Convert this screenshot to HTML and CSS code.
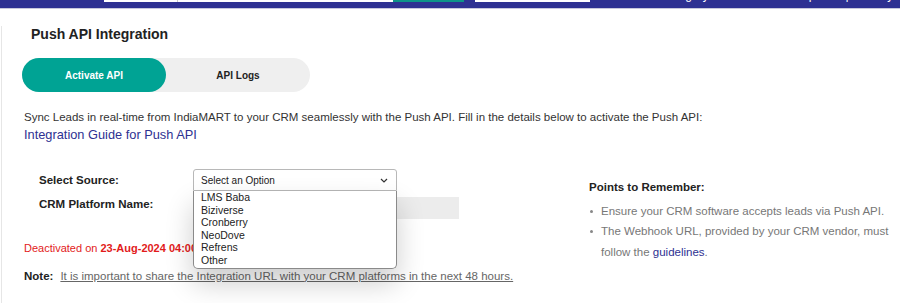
FILE: index.html
```html
<!DOCTYPE html>
<html lang="en">
<head>
<meta charset="utf-8">
<title>Push API Integration</title>
<link rel="stylesheet" href="styles.css">
</head>
<body>
<header class="topbar">
  <div class="topbar-inner">
    <div class="search">
      <div class="search-cat"></div>
      <div class="search-input"></div>
    </div>
    <div class="search-btn"></div>
    <div class="loc"></div>
    <div class="nav-text">
      <span class="nav-a">Buy Category</span>
      <span class="nav-b">Help</span>
      <span class="nav-c">| Hi Kavya</span>
    </div>
  </div>
</header>

<main class="panel">
  <h1 class="title">Push API Integration</h1>

  <div class="tabs">
    <button class="tab active" type="button">Activate API</button>
    <button class="tab" type="button">API Logs</button>
  </div>

  <div class="intro">
    <p class="intro-text">Sync Leads in real-time from IndiaMART to your CRM seamlessly with the Push API. Fill in the details below to activate the Push API:</p>
    <a class="intro-link" href="#">Integration Guide for Push API</a>
  </div>

  <div class="content">
    <div class="form">
      <div class="row row-select">
        <label class="label">Select Source:</label>
        <div class="select-wrap">
          <div class="select">
            <span>Select an Option</span>
            <svg class="chev" width="8" height="5" viewBox="0 0 8 5"><polyline points="1,1 4,4 7,1" fill="none" stroke="#333" stroke-width="1.2"/></svg>
          </div>
          <ul class="dropdown">
            <li>LMS Baba</li>
            <li>Biziverse</li>
            <li>Cronberry</li>
            <li>NeoDove</li>
            <li>Refrens</li>
            <li>Other</li>
          </ul>
        </div>
      </div>
      <div class="row row-crm">
        <label class="label">CRM Platform Name:</label>
        <div class="crm-input"></div>
      </div>
      <p class="status">Deactivated on <strong>23-Aug-2024 04:00:00 PM</strong></p>
    </div>

    <aside class="points">
      <h2 class="points-title">Points to Remember:</h2>
      <ul class="points-list">
        <li>Ensure your CRM software accepts leads via Push API.</li>
        <li>The Webhook URL, provided by your CRM vendor, must follow the <a href="#">guidelines</a>.</li>
      </ul>
    </aside>
  </div>

  <p class="note"><strong>Note:</strong><span class="note-text">It is important to share the Integration URL with your CRM platforms in the next 48 hours.</span></p>
</main>
</body>
</html>
```

FILE: styles.css
```css
* { box-sizing: border-box; }

body {
  margin: 0;
  background: #fff;
  font-family: "Liberation Sans", Arial, sans-serif;
  color: #222;
}

/* top bar */
.topbar {
  height: 9px;
  background: #2e3192;
  border-bottom: 1px solid #c8c8dc;
  overflow: hidden;
}
.topbar-inner {
  display: flex;
  height: 30px;
  margin-top: -28px;
  padding-left: 104px;
}
.search {
  display: flex;
  width: 289px;
  background: #fff;
}
.search-cat {
  width: 74px;
  border-right: 1px solid #c9c9c9;
}
.search-input { flex: 1; }
.search-btn {
  width: 71px;
  background: #0d9488;
}
.loc {
  width: 115px;
  margin-left: 11px;
  background: #fff;
}
.nav-text {
  display: flex;
  align-items: flex-end;
  flex: 1;
  color: #fff;
  font-size: 12px;
  line-height: 13px;
}
.nav-a { margin-left: 70px; }
.nav-b { margin-left: 60px; }
.nav-c { margin-left: 30px; white-space: nowrap; }

/* panel */
.panel {
  margin-left: 1px;
  border-left: 1px solid #e6e6e6;
  padding-left: 22px;
  padding-bottom: 20px;
}

.title {
  margin: 17px 0 0 7px;
  font-size: 14px;
  line-height: 16px;
  font-weight: bold;
  color: #222;
}

.tabs {
  display: flex;
  width: 288px;
  height: 34px;
  margin: 16px 0 0 -2px;
  border-radius: 17px;
  background: #efefef;
}
.tab {
  flex: 1;
  border: 0;
  background: transparent;
  border-radius: 17px;
  font-family: inherit;
  font-size: 10px;
  font-weight: bold;
  color: #222;
  padding: 0;
}
.tab.active {
  background: #00a394;
  color: #fff;
}

.intro {
  margin-top: 16px;
}
.intro-text {
  margin: 0;
  font-size: 11.5px;
  line-height: 18px;
  color: #333;
}
.intro-link {
  display: block;
  font-size: 12.8px;
  line-height: 18px;
  color: #2e3192;
  text-decoration: none;
}

/* content */
.content {
  display: grid;
  grid-template-columns: 565px 300px;
  margin-top: 25px;
}

.row {
  display: flex;
  padding-left: 15px;
}
.row-select {
  align-items: center;
  height: 22px;
}
.row-crm {
  align-items: flex-start;
  margin-top: 6px;
}
.label {
  width: 154px;
  font-size: 11.5px;
  line-height: 14px;
  font-weight: bold;
  color: #222;
}

.select-wrap {
  position: relative;
  z-index: 2;
}
.select {
  display: flex;
  align-items: center;
  justify-content: space-between;
  width: 204px;
  height: 22px;
  padding: 0 7px;
  border: 1px solid #b8b8b8;
  border-radius: 3px 3px 0 0;
  background: #fff;
  font-size: 10px;
  color: #222;
}
.chev { margin-right: 1px; }

.dropdown {
  position: absolute;
  top: 100%;
  left: 0;
  width: 204px;
  margin: 0;
  padding: 0 0 1px;
  list-style: none;
  background: #fff;
  border: 1px solid #8a8a8a;
  border-top: 0;
  border-radius: 0 0 5px 5px;
  box-shadow: 0 14px 28px rgba(0, 0, 0, 0.2);
}
.dropdown li {
  padding-left: 7px;
  font-size: 10.5px;
  line-height: 12.6px;
  color: #222;
}

.crm-input {
  width: 266px;
  height: 22px;
  background: #ececec;
}

.status {
  margin: 22px 0 0;
  font-size: 11px;
  line-height: 14px;
  color: #e21b1b;
  white-space: nowrap;
}

/* points */
.points {
  padding-top: 11px;
}
.points-title {
  margin: 0;
  font-size: 11.5px;
  line-height: 14px;
  font-weight: bold;
  color: #222;
}
.points-list {
  margin: 7px 0 0;
  padding: 0;
  list-style: none;
}
.points-list li {
  position: relative;
  padding-left: 12px;
  font-size: 11.5px;
  line-height: 20.3px;
  color: #777;
}
.points-list li::before {
  content: "";
  position: absolute;
  left: 1px;
  top: 9px;
  width: 3px;
  height: 3px;
  border-radius: 50%;
  background: #888;
}
.points-list a {
  color: #2e3192;
  text-decoration: none;
}

.note {
  margin: 7px 0 0;
  font-size: 11.5px;
  line-height: 14px;
}
.note strong { color: #222; }
.note-text {
  margin-left: 7px;
  color: #666;
  text-decoration: underline;
}
```
